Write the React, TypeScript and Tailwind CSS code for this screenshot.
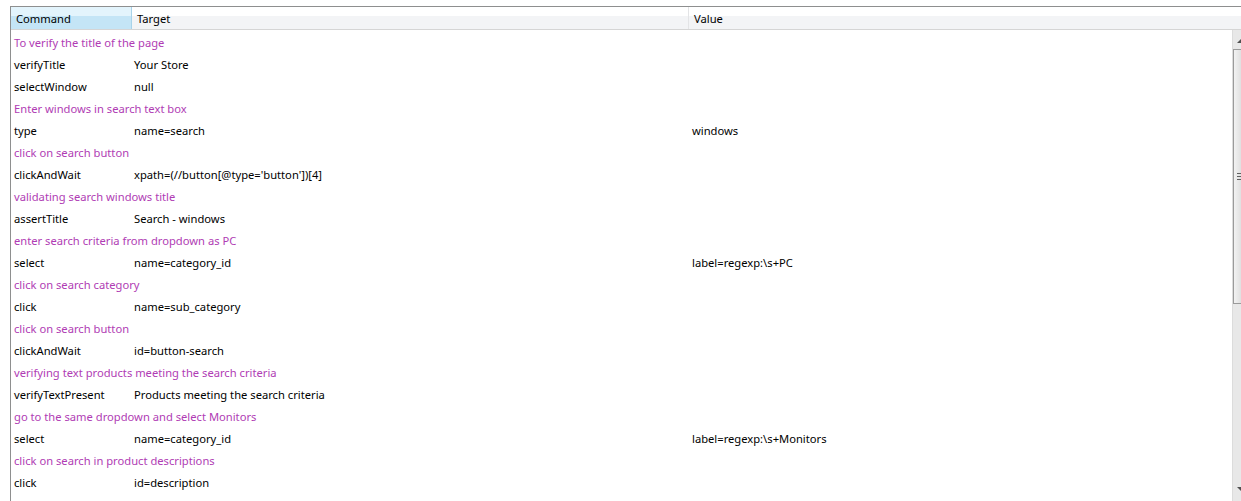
import React from "react";

type Row = { c?: string; cmd?: string; t?: string; v?: string };

const rows: Row[] = [
  { c: "To verify the title of the page" },
  { cmd: "verifyTitle", t: "Your Store" },
  { cmd: "selectWindow", t: "null" },
  { c: "Enter windows in search text box" },
  { cmd: "type", t: "name=search", v: "windows" },
  { c: "click on search button" },
  { cmd: "clickAndWait", t: "xpath=(//button[@type='button'])[4]" },
  { c: "validating search windows title" },
  { cmd: "assertTitle", t: "Search - windows" },
  { c: "enter search criteria from dropdown as PC" },
  { cmd: "select", t: "name=category_id", v: "label=regexp:\\s+PC" },
  { c: "click on search category" },
  { cmd: "click", t: "name=sub_category" },
  { c: "click on search button" },
  { cmd: "clickAndWait", t: "id=button-search" },
  { c: "verifying text products meeting the search criteria" },
  { cmd: "verifyTextPresent", t: "Products meeting the search criteria" },
  { c: "go to the same dropdown and select Monitors" },
  { cmd: "select", t: "name=category_id", v: "label=regexp:\\s+Monitors" },
  { c: "click on search in product descriptions" },
  { cmd: "click", t: "id=description" },
  { c: "click on search button" },
];

export default function App() {
  return (
    <div
      className="w-[1241px] h-[501px] bg-white overflow-hidden pt-[6px] pl-[10px] text-[11.2px] text-black"
      style={{ fontFamily: '"Noto Sans", sans-serif' }}
    >
      <div className="h-[495px] border-t border-l border-[#8e8f8f] flex flex-col">
        {/* header */}
        <div className="flex h-[23px] border-b border-[#d5d5d5] shrink-0">
          <div className="w-[121px] h-full flex items-center pt-[3px] pl-[5px] border-r border-[#a8d3ea] bg-[linear-gradient(#e3f4fc_0%,#e3f4fc_40%,#c4e5f6_41%,#c4e5f6_100%)]">
            Command
          </div>
          <div className="w-[557px] h-full flex items-center pt-[3px] pl-[5px] border-r border-[#e3e4e6] bg-[linear-gradient(#ffffff_0%,#ffffff_40%,#f3f4f6_41%,#f3f4f6_100%)]">
            Target
          </div>
          <div className="flex-1 h-full flex items-center pt-[3px] pl-[5px] bg-[linear-gradient(#ffffff_0%,#ffffff_40%,#f3f4f6_41%,#f3f4f6_100%)]">
            Value
          </div>
        </div>
        {/* body */}
        <div className="flex flex-1 min-h-0">
          <div className="flex-1 pt-[2px] overflow-hidden">
            {rows.map((r, i) =>
              r.c ? (
                <div key={i} className="h-[22px] flex items-center pl-[3px] text-[#b03cb4] whitespace-nowrap">
                  {r.c}
                </div>
              ) : (
                <div key={i} className="h-[22px] flex items-center whitespace-nowrap">
                  <div className="w-[123px] pl-[3px]">{r.cmd}</div>
                  <div className="w-[558px]">{r.t}</div>
                  <div>{r.v}</div>
                </div>
              )
            )}
          </div>
          {/* scrollbar */}
          <div className="w-[9px] shrink-0 bg-[#e8e8e8] border-l border-[#dcdcdc] flex flex-col pt-[1px]">
            <div className="h-[18px] relative">
              <div className="absolute left-[4px] top-[8px] w-0 h-0 border-l-[4px] border-r-[4px] border-b-[4px] border-l-transparent border-r-transparent border-b-[#505050]" />
            </div>
            <div className="h-[255px] border-l border-t border-b border-[#9a9a9a] bg-[linear-gradient(90deg,#f2f2f2,#e0e0e0)] flex flex-col items-end justify-center gap-[2px]">
              <div className="w-[4px] h-[1px] bg-[#606060]" />
              <div className="w-[4px] h-[1px] bg-[#606060]" />
              <div className="w-[4px] h-[1px] bg-[#606060]" />
            </div>
            <div className="flex-1" />
            <div className="h-[18px] relative">
              <div className="absolute left-[4px] top-[4px] w-0 h-0 border-l-[4px] border-r-[4px] border-t-[4px] border-l-transparent border-r-transparent border-t-[#505050]" />
            </div>
          </div>
        </div>
      </div>
    </div>
  );
}
